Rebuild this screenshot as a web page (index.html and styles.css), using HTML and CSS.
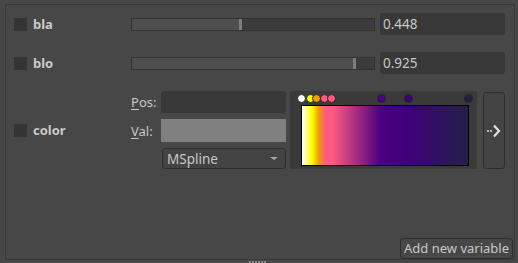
FILE: index.html
```html
<!DOCTYPE html>
<html lang="en">
<head>
    <meta charset="UTF-8">
    <title>Variables</title>
    <link rel="stylesheet" href="styles.css">
</head>
<body>
    <div class="frame">
        <div class="rows">
            <div class="var-row">
                <div class="var-name"><span class="check"></span>bla</div>
                <div class="slider"><div class="slider-fill" style="width: 107px"></div><div class="slider-handle"></div></div>
                <div class="value-box">0.448</div>
            </div>
            <div class="var-row">
                <div class="var-name"><span class="check"></span>blo</div>
                <div class="slider"><div class="slider-fill" style="width: 221px"></div><div class="slider-handle"></div></div>
                <div class="value-box">0.925</div>
            </div>
            <div class="var-row color-row">
                <div class="var-name"><span class="check"></span>color</div>
                <div class="color-form">
                    <label><u>P</u>os:</label>
                    <div class="pos-box"></div>
                    <label><u>V</u>al:</label>
                    <div class="val-box"></div>
                    <div class="combo">MSpline<span class="combo-arrow"></span></div>
                </div>
                <div class="gradient-panel">
                    <div class="stops">
                        <span class="stop" style="left: 0%; background: #ffffff"></span>
                        <span class="stop" style="left: 5.4%; background: #ffff00"></span>
                        <span class="stop" style="left: 9%; background: #f0a000"></span>
                        <span class="stop" style="left: 13.8%; background: #ff5a80"></span>
                        <span class="stop" style="left: 18%; background: #ff5a80"></span>
                        <span class="stop" style="left: 47.5%; background: #4b0082"></span>
                        <span class="stop" style="left: 63.5%; background: #40007a"></span>
                        <span class="stop" style="left: 99.5%; background: #232048"></span>
                    </div>
                    <div class="gradient"></div>
                </div>
                <button class="arrow-btn">
                    <svg width="14" height="14" viewBox="0 0 14 14">
                        <rect x="0" y="6" width="2" height="2" fill="#b8b8b8"/>
                        <rect x="3" y="6" width="2" height="2" fill="#b8b8b8"/>
                        <path d="M7 1.5 L12 7 L7 12.5" fill="none" stroke="#e0e0e0" stroke-width="2.2"/>
                    </svg>
                </button>
            </div>
        </div>
        <div class="footer">
            <button class="add-btn">Add new variable</button>
        </div>
    </div>
    <div class="grip">
        <span></span><span></span><span></span><span></span><span></span><span></span>
    </div>
</body>
</html>
```

FILE: styles.css
```css
html, body {
    margin: 0;
    height: 100%;
    overflow: hidden;
}
body {
    background: #474747;
    color: #c8c8c8;
    font-family: "Noto Sans", "DejaVu Sans", sans-serif;
    font-size: 13px;
    padding: 4px 4px 0 5px;
    box-sizing: border-box;
}
.frame {
    width: 510px;
    height: 256px;
    box-sizing: border-box;
    border: 1px solid #393939;
    padding: 8px 1px 0 8px;
    display: flex;
    flex-direction: column;
}
.rows {
    display: flex;
    flex-direction: column;
    gap: 17px;
    padding-right: 7px;
}
.var-row {
    display: flex;
    align-items: center;
    height: 22px;
}
.var-name {
    width: 117px;
    flex-shrink: 0;
    display: flex;
    align-items: center;
    gap: 6px;
    font-weight: bold;
    color: #cacaca;
}
.check {
    width: 13px;
    height: 13px;
    background: #353535;
    display: inline-block;
}
.slider {
    width: 244px;
    height: 13px;
    box-sizing: border-box;
    border: 1px solid #333;
    background: #3b3b3b;
    display: flex;
}
.slider-fill {
    background: #4e4e4e;
}
.slider-handle {
    width: 3px;
    background: #7e7e7e;
}
.value-box {
    margin-left: 5px;
    width: 125px;
    height: 22px;
    box-sizing: border-box;
    background: #383838;
    border-radius: 3px;
    padding: 2px 3px;
    line-height: 18px;
    font-size: 13.5px;
}

/* color row */
.color-row {
    height: 78px;
    align-items: flex-start;
}
.color-row .var-name {
    height: 78px;
}
.color-form {
    display: grid;
    grid-template-columns: 30px 125px;
    grid-template-rows: 22px 23px 21px;
    row-gap: 6px;
    align-items: center;
}
.color-form label {
    color: #c8c8c8;
}
.color-form u {
    text-decoration-thickness: 1px;
    text-underline-offset: 2px;
}
.pos-box {
    height: 22px;
    background: #383838;
    border-radius: 3px;
}
.val-box {
    height: 23px;
    background: #808080;
}
.combo {
    grid-column: 2;
    height: 21px;
    box-sizing: border-box;
    margin-left: 1px;
    border: 1px solid #2e2e2e;
    border-radius: 3px;
    background: #434343;
    padding-left: 4px;
    line-height: 18px;
    font-size: 13.5px;
    display: flex;
    align-items: center;
    justify-content: space-between;
    padding-right: 7px;
}
.combo-arrow {
    width: 0;
    height: 0;
    border-left: 4px solid transparent;
    border-right: 4px solid transparent;
    border-top: 3px solid #a8a8a8;
}
.gradient-panel {
    margin-left: 4px;
    width: 187px;
    height: 78px;
    box-sizing: border-box;
    background: #3a3a3a;
    padding: 0 8px 3px 11px;
    display: flex;
    flex-direction: column;
}
.stops {
    position: relative;
    height: 14px;
}
.stop {
    position: absolute;
    top: 3px;
    width: 7px;
    height: 7px;
    margin-left: -4px;
    border-radius: 50%;
    border: 1px solid #252525;
}
.gradient {
    flex: 1;
    border: 1px solid #000;
    background: linear-gradient(to right,
        #ffffff 0%, #ffff00 6%, #f0a000 10%, #ff5a80 14%, #ff5a80 18%,
        #4b0082 47.5%, #40007a 63.5%, #232048 100%);
}
.arrow-btn {
    margin-left: 6px;
    margin-top: 1px;
    width: 22px;
    height: 77px;
    box-sizing: border-box;
    border: 1px solid #2e2e2e;
    border-radius: 3px;
    background: #434343;
    padding: 0;
    display: flex;
    align-items: center;
    justify-content: center;
}
.footer {
    margin-top: auto;
    display: flex;
    justify-content: flex-end;
}
.add-btn {
    height: 21px;
    box-sizing: border-box;
    border: 1px solid #2e2e2e;
    border-radius: 3px;
    background: #474747;
    color: #c8c8c8;
    font-family: "Noto Sans", "DejaVu Sans", sans-serif;
    font-size: 13px;
    padding: 0 3px;
    line-height: 17px;
}
.grip {
    display: flex;
    justify-content: center;
    gap: 1px;
    margin-top: 1px;
    padding-right: 4px;
}
.grip span {
    width: 2px;
    height: 2px;
    background: #8a8a8a;
}
```
